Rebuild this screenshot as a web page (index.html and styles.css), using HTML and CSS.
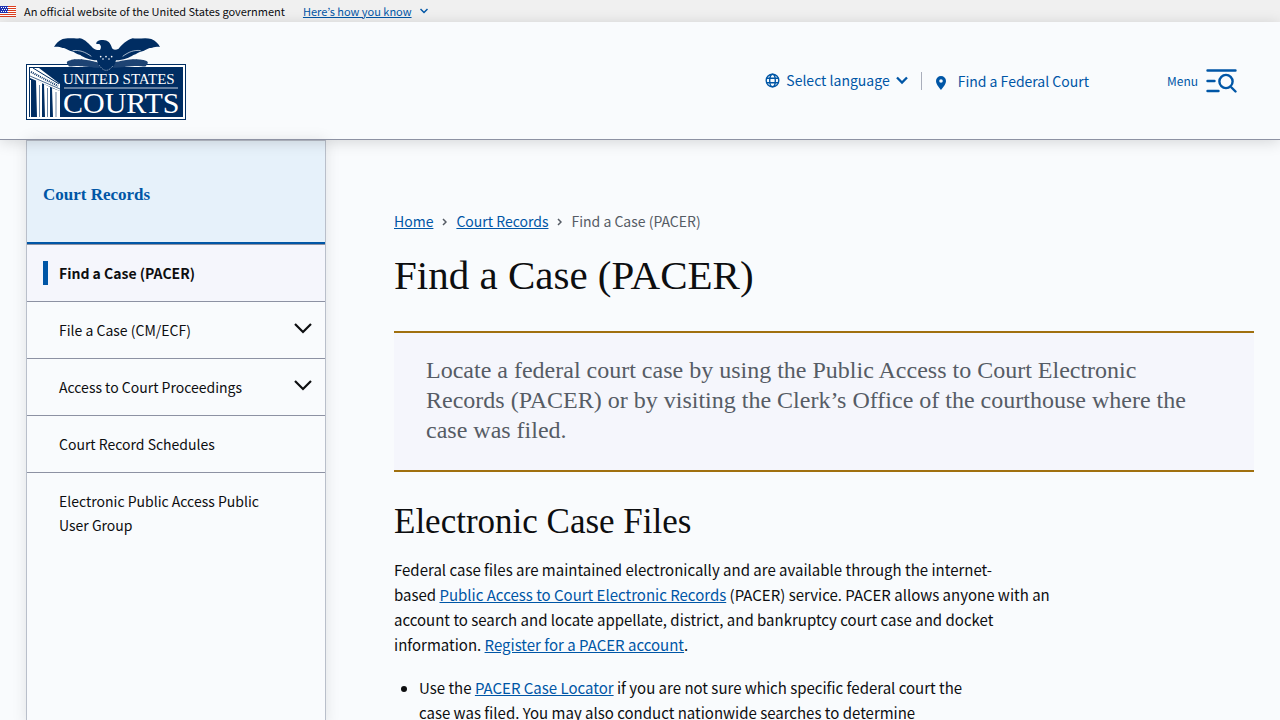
FILE: index.html
```
<!DOCTYPE html>
<html lang="en">
<head>
  <meta charset="UTF-8">
  <meta name="viewport" content="width=device-width, initial-scale=1">
  <title>Find a Case (PACER) | United States Courts</title>
  <link rel="stylesheet" href="styles.css">
</head>
<body>

<div class="banner">
  <svg class="flag" viewBox="0 0 16 11" aria-hidden="true">
    <rect width="16" height="11" fill="#fff"/>
    <path d="M0 .5h16M0 2.5h16M0 4.5h16M0 6.5h16M0 8.5h16M0 10.5h16" stroke="#db3e1f"/>
    <rect width="8" height="7" fill="#1e33b1"/>
    <path d="M1 1.5h7M2 3.5h6M1 5.5h7" stroke="#fff" stroke-dasharray="1 1"/>
  </svg>
  <span>An official website of the United States government</span>
  <button class="banner-link"><span>Here’s how you know</span>
    <svg width="8" height="6" viewBox="0 0 8 6" aria-hidden="true"><path d="M.5 1l3.500 3.500 3.500-3.500" fill="none" stroke="currentColor" stroke-width="1.500"/></svg>
  </button>
</div>

<header class="header">
  <a class="logo" href="#" aria-label="United States Courts">
    <svg width="160" height="82" viewBox="0 0 160 82">
      <rect x=".5" y="26.500" width="159" height="55" fill="#fff" stroke="#002d62"/>
      <rect x="3" y="29" width="154" height="50" fill="#002d62"/>
      <!-- eagle -->
      <g transform="scale(.3333) translate(-18 -24)">
        <g fill="none" stroke="#1d4373" stroke-width="11" stroke-dasharray="9 1" stroke-linecap="round">
          <path d="M146 98C165 90 190 92 230 102M150 104C180 100 200 106 236 108"/>
          <path d="M378 98C355 90 330 92 285 102M374 104C340 100 320 106 282 108"/>
        </g>
        <path fill="#002d62" d="M102 51C108 40 116 32 128 27C142 22 166 26 180 25C196 28 208 44 218 53C224 59 232 61 240 60C244 53 244 47 238 42L229 42C228 34 236 30 247 30C262 29 272 38 276 54C280 61 288 60 296 56C306 44 320 30 338 25C360 27 378 22 394 27C407 32 415 41 420 51C407 48 400 52 393 54C382 54 376 62 367 64C356 65 350 74 340 75C330 82 310 91 288 91C286 101 280 111 274 119C265 125 252 125 244 119C238 110 232 101 231 91C210 91 190 82 181 75C170 74 164 66 155 64C145 62 139 54 128 54C120 51 110 49 102 51Z"/>
        <path fill="none" stroke="#f9fafd" stroke-width="2" d="M158 62C178 59 196 66 214 79M362 62C342 59 326 66 308 79"/>
        <path fill="none" stroke="#fff" stroke-width="5" stroke-linecap="round" d="M242 80h.1M249 87h.1M258 80h.1M267 87h.1M275 80h.1"/>
        <path fill="none" stroke="#fff" stroke-width="2" stroke-dasharray="3 3" d="M238 106Q258 136 280 106"/>
      </g>
      <!-- courthouse -->
      <path fill="#fff" d="M4 30h9L34 46v7L4 40Z"/>
      <path fill="none" stroke="#002d62" d="M7 30L33 46"/>
      <path fill="none" stroke="#002d62" stroke-width="2" stroke-dasharray="1 1" d="M5 34L32 48"/>
      <path fill="none" stroke="#002d62" stroke-width=".7" d="M4 38L34 51"/>
      <path fill="#fff" d="M4 42h1v37H4zM10 42l6 3v34h-5zM18 46l6 3v30h-5zM26 50l8 3v26h-7z"/>
      <path fill="none" stroke="#002d62" stroke-width=".6" d="M13.500 47v32M21.500 50v29M30 54v25"/>
      <g fill="#fff" class="logo-text">
        <text x="37" y="46" font-size="15">UNITED STATES</text>
        <text x="37" y="75" font-size="30">COURTS</text>
      </g>
      <path d="M38 50h114" stroke="#c9d3e0"/>
    </svg>
  </a>
  <nav class="tools" aria-label="Tools">
    <button class="tool language">
      <svg width="15" height="15" viewBox="0 0 15 15" fill="none" stroke="currentColor" stroke-width="1.400" aria-hidden="true">
        <circle cx="7.500" cy="7.500" r="6.300"/><ellipse cx="7.500" cy="7.500" rx="2.800" ry="6.300"/><path d="M1.500 5.300h12M1.500 9.700h12"/>
      </svg>
      Select language
      <svg width="12" height="9" viewBox="0 0 12 9" aria-hidden="true"><path d="M1 1.500l5 5 5-5" fill="none" stroke="currentColor" stroke-width="2.300"/></svg>
    </button>
    <a class="tool find" href="#">
      <svg class="pin" width="10" height="14" viewBox="0 0 10 14" aria-hidden="true"><path fill="currentColor" fill-rule="evenodd" d="M5 0a5 5 0 0 0-5 5c0 3.600 5 9 5 9s5-5.400 5-9a5 5 0 0 0-5-5zm0 3.200a1.800 1.800 0 1 1 0 3.600 1.800 1.800 0 0 1 0-3.600z"/></svg>
      Find a Federal Court
    </a>
    <button class="tool menu">
      Menu
      <svg width="31" height="24" viewBox="0 0 31 24" fill="none" stroke="currentColor" stroke-width="2.400" stroke-linecap="round" aria-hidden="true">
        <path d="M1.500 1.500h28M1.500 12h7M1.500 22h11M25.500 18.500l4 4"/><circle cx="20" cy="12.500" r="6.600"/>
      </svg>
    </button>
  </nav>
</header>

<div class="page">
  <aside class="sidebar">
    <a class="section-title" href="#">Court Records</a>
    <ul class="side-nav">
      <li class="current"><a href="#">Find a Case (PACER)</a></li>
      <li><a href="#">File a Case (CM/ECF)</a>
        <button aria-label="Show File a Case pages"><svg width="18" height="11" viewBox="0 0 18 11" aria-hidden="true"><path d="M1 1l8 8 8-8" fill="none" stroke="currentColor" stroke-width="2.200"/></svg></button></li>
      <li><a href="#">Access to Court Proceedings</a>
        <button aria-label="Show Access to Court Proceedings pages"><svg width="18" height="11" viewBox="0 0 18 11" aria-hidden="true"><path d="M1 1l8 8 8-8" fill="none" stroke="currentColor" stroke-width="2.200"/></svg></button></li>
      <li><a href="#">Court Record Schedules</a></li>
      <li><a href="#">Electronic Public Access Public User Group</a></li>
    </ul>
  </aside>

  <main class="content">
    <nav class="breadcrumb" aria-label="Breadcrumb">
      <a href="#">Home</a>
      <svg width="5" height="8" viewBox="0 0 5 8" aria-hidden="true"><path d="M1 1l3 3-3 3" fill="none" stroke="currentColor" stroke-width="1.500"/></svg>
      <a href="#">Court Records</a>
      <svg width="5" height="8" viewBox="0 0 5 8" aria-hidden="true"><path d="M1 1l3 3-3 3" fill="none" stroke="currentColor" stroke-width="1.500"/></svg>
      <span>Find a Case (PACER)</span>
    </nav>
    <h1>Find a Case (PACER)</h1>
    <p class="intro">Locate a federal court case by using the Public Access to Court Electronic Records (PACER) or by visiting the Clerk’s Office of the courthouse where the case was filed.</p>
    <div class="text">
      <h2>Electronic Case Files</h2>
      <p>Federal case files are maintained electronically and are available through the internet-based&nbsp;<a href="#">Public Access to Court Electronic Records</a> (PACER) service. PACER allows anyone with an account to search and locate appellate, district, and bankruptcy court case and docket information. <a href="#">Register for a PACER account</a>.</p>
      <ul>
        <li>Use the <a href="#">PACER Case Locator</a> if you are not sure which specific federal court the case was filed. You may also conduct nationwide searches to determine</li>
      </ul>
    </div>
  </main>
</div>

</body>
</html>
```

FILE: styles.css
```
* {
  box-sizing: border-box;
}
html {
  overflow: hidden;
}
body {
  margin: 0;
  font-family: "Noto Sans CJK KR", sans-serif;
  font-size: 15px;
  line-height: 25px;
  color: #0d0e10;
  background: #f9fbfd;
}
a, button {
  color: #0056a6;
}
button {
  padding: 0;
  border: none;
  background: none;
  font: inherit;
  cursor: pointer;
}
.banner {
  display: flex;
  align-items: center;
  height: 22px;
  gap: 8px;
  background: #f0f0f0;
  font-size: 11px;
}
.flag {
  width: 16px;
  height: 11px;
}
.banner-link {
  display: flex;
  align-items: center;
  gap: 8px;
  padding-left: 10px;
}
.banner-link span {
  text-decoration: underline;
}
.header {
  position: relative;
  display: flex;
  align-items: center;
  justify-content: space-between;
  height: 118px;
  padding: 0 43px 0 26px;
  border-bottom: 1px solid #8d92a3;
  box-shadow: 0 2px 14px rgba(0, 0, 0, 0.15);
}
.logo {
  display: flex;
  padding-bottom: 4px;
}
.logo-text {
  font-family: "Liberation Serif", serif;
}
.tools, .tool {
  display: flex;
  align-items: center;
}
.tool {
  gap: 6px;
  font-size: 14px;
  text-decoration: none;
}
.language {
  padding-right: 13px;
}
.find {
  gap: 12px;
  padding-left: 14px;
  border-left: 1px solid #a9aebb;
  line-height: 16px;
}
.pin {
  margin-top: 4px;
}
.menu {
  gap: 8px;
  margin-left: 78px;
  font-size: 12px;
}
.page {
  display: flex;
  gap: 68px;
  padding: 0 26px;
}
.sidebar {
  flex: 0 0 300px;
  min-height: 580px;
  border: 1px solid #b9bfca;
  box-shadow: 0 0 14px rgba(0, 0, 0, 0.1);
}
.section-title {
  display: flex;
  align-items: center;
  height: 103px;
  padding: 6px 16px 0;
  border-bottom: 2px solid #0056a6;
  background: #e6f1fa;
  font-family: "Liberation Serif", serif;
  font-size: 17px;
  font-weight: bold;
  text-decoration: none;
}
.side-nav {
  margin: 0;
  padding: 0;
  list-style: none;
  line-height: 24px;
  font-size: 14px;
}
.side-nav li {
  display: flex;
  justify-content: space-between;
  padding: 16px 13px 16px 32px;
  border-top: 1px solid #8d92a3;
}
.side-nav a {
  max-width: 220px;
  color: #0d0e10;
  text-decoration: none;
}
.side-nav .current {
  padding-left: 16px;
  background: #f5f6fc;
  font-weight: bold;
}
.current a {
  padding-left: 11px;
  border-left: 5px solid #0056a6;
}
.side-nav button {
  display: flex;
  padding-top: 5px;
  color: #0d0e10;
}
.content {
  flex: 1;
  padding-top: 69px;
}
.breadcrumb {
  display: flex;
  align-items: center;
  gap: 9px;
  font-size: 14px;
  color: #565c65;
}
h1, h2, .intro {
  font-family: "Liberation Serif", serif;
  font-weight: normal;
}
h1 {
  margin: 16px 0 31px;
  font-size: 41px;
  line-height: 50px;
}
.intro {
  margin: 0;
  padding: 22px 60px 25px 32px;
  border-top: 2px solid #a0700f;
  border-bottom: 2px solid #a0700f;
  background: #f5f6fc;
  font-size: 24px;
  line-height: 30px;
  color: #565c65;
}
.text {
  max-width: 672px;
}
h2 {
  margin: 31px 0 16px;
  font-size: 35px;
  line-height: 38px;
}
.text p {
  margin: 0;
}
.text ul {
  max-width: 600px;
  margin: 18px 0 0;
  padding-left: 25px;
}
```
